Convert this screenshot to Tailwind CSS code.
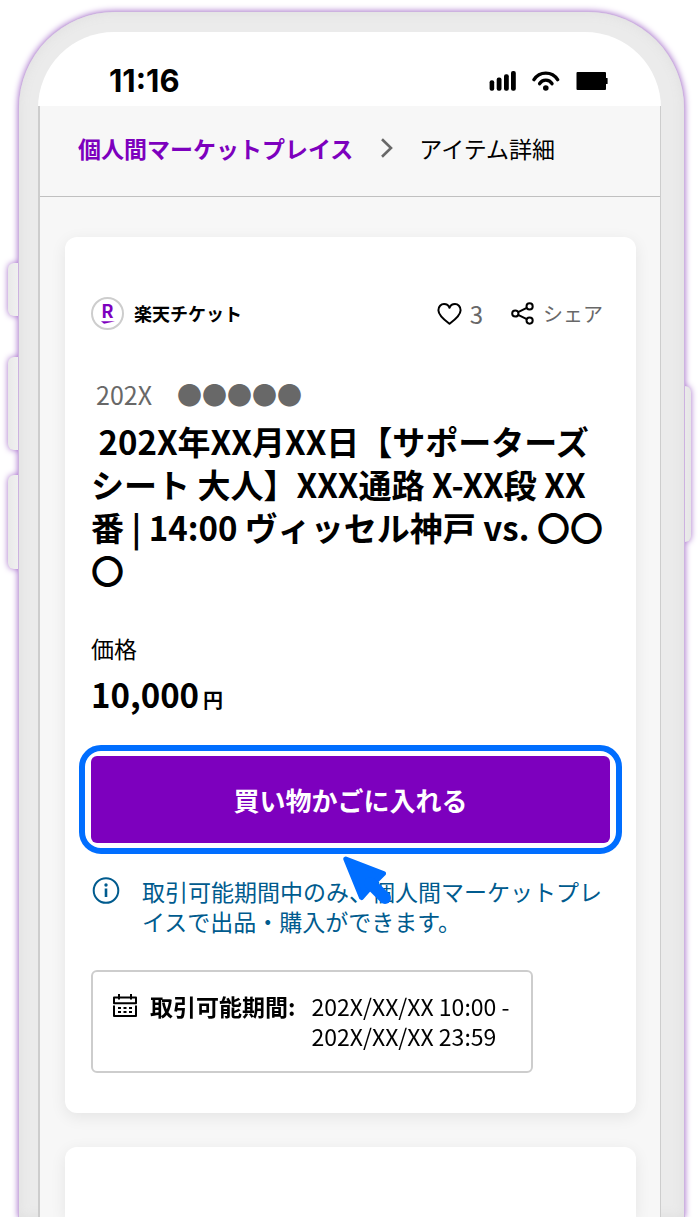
<!DOCTYPE html>
<html lang="ja">
<head>
  <meta charset="UTF-8" />
  <meta name="viewport" content="width=device-width, initial-scale=1.0" />
  <title>アイテム詳細 | 個人間マーケットプレイス</title>
  <script src="https://cdn.jsdelivr.net/npm/@tailwindcss/browser@4"></script>
</head>
<body class="min-h-screen flex flex-col bg-white pt-3 pl-[19px] pr-[14px] overflow-x-hidden text-black font-['Noto_Sans_CJK_JP','Noto_Sans',sans-serif]">

  <!-- Phone -->
  <div class="relative flex-1 flex flex-col drop-shadow-[0_0_3px_#a66fcb]">

    <!-- Side buttons -->
    <div class="absolute top-[251px] -left-[11px] w-4 h-[53px] rounded-l-md bg-linear-to-r from-[#e9e9e9] to-[#f4f4f4]"></div>
    <div class="absolute top-[345px] -left-[11px] w-4 h-[93px] rounded-l-md bg-linear-to-r from-[#e9e9e9] to-[#f4f4f4]"></div>
    <div class="absolute top-[463px] -left-[11px] w-4 h-[94px] rounded-l-md bg-linear-to-r from-[#e9e9e9] to-[#f4f4f4]"></div>
    <div class="absolute top-[374px] -right-[7px] w-4 h-[156px] rounded-r-md bg-linear-to-r from-[#f0f0f0] to-[#e6e6e6]"></div>

    <div class="relative flex-1 flex flex-col rounded-t-[96px] pt-5 pl-[19px] pr-[23px] bg-[#ebebeb] shadow-[inset_0_0_12px_#dfdfdf,0_0_0_1px_#cdb2e0]">
      <div class="flex-1 flex flex-col rounded-t-[76px] bg-white">

        <!-- Status bar -->
        <div class="h-[74px] pt-6 pl-[71px] pr-[53px] flex items-center justify-between">
          <span class="font-['Inter',sans-serif] font-bold text-[31px] leading-8">11:16</span>
          <div class="flex items-center gap-4">
            <svg class="w-[27px] h-5" viewBox="0 0 27 20">
              <rect x="0.6" y="9.2" width="4.6" height="10.6" rx="2" />
              <rect x="7.7" y="6.4" width="4.8" height="13.4" rx="2" />
              <rect x="15" y="3.2" width="4.8" height="16.6" rx="2" />
              <rect x="22" y="0" width="4.8" height="19.8" rx="2" />
            </svg>
            <svg class="w-7 h-5" viewBox="0 0 28 20" fill="none" stroke="#000" stroke-width="3.4" stroke-linecap="round">
              <path d="M2 8.6A14 14 0 0 1 25.6 8.6" />
              <path d="M7.6 12.7A7.2 7.2 0 0 1 20 12.7" />
              <circle cx="13.8" cy="17" r="2.8" fill="#000" stroke="none" />
            </svg>
            <svg class="w-8 h-[18px]" viewBox="0 0 32 18">
              <rect x="0.5" width="29.5" height="18" rx="1" />
              <rect x="29" y="6" width="2.6" height="6" rx="0.6" />
            </svg>
          </div>
        </div>

        <div class="flex-1 flex flex-col bg-[#f7f7f7] border-l-2 border-r border-[#cdcdcd]">

          <!-- Breadcrumb -->
          <nav class="h-[91px] pl-[38px] pb-1.5 flex items-center border-b border-[#c0c0c0] text-[23px] leading-8">
            <a href="#" class="font-bold text-[#7d00be]">個人間マーケットプレイス</a>
            <svg class="w-4 h-5 ml-[26px] mr-6" viewBox="0 0 16 20" fill="none" stroke="#686868" stroke-width="2.6">
              <path d="M3 1.2L12 10L3 18.8" />
            </svg>
            <span>アイテム詳細</span>
          </nav>

          <main class="flex-1 flex flex-col gap-[34px] pt-10 pl-[25px] pr-6">

            <section class="rounded-xl bg-white pt-15 pb-10 px-[26px] shadow-[0_4px_16px_rgba(0,0,0,0.08)]">

              <!-- Seller and actions -->
              <div class="flex items-center h-[33px]">
                <div class="relative w-[33px] h-[33px] rounded-full border-2 border-[#cdcdcd] flex justify-center text-[#7d00be]">
                  <span class="font-bold text-lg leading-[22px]">R</span>
                  <svg class="absolute left-2 bottom-1 w-[14px] h-[3px]" viewBox="0 0 14 3" fill="currentColor">
                    <path d="M0 0.2H14L3 2.8z" />
                  </svg>
                </div>
                <span class="ml-[10px] pb-0.5 font-bold text-lg leading-8">楽天チケット</span>
                <div class="ml-auto mr-[7px] flex items-center gap-7 text-[#686868]">
                  <button type="button" class="flex items-center gap-2 text-2xl leading-8">
                    <svg class="w-[25px] h-[22px]" viewBox="0 0 25 22" fill="none" stroke="#000" stroke-width="2" stroke-linejoin="round">
                      <path d="M12.5 20.8C8.8 18 1.4 12.6 1.4 7.2C1.4 3.6 4 1 7 1C9.4 1 11.6 2.4 12.5 4.8C13.4 2.4 15.6 1 18 1C21 1 23.6 3.6 23.6 7.2C23.6 12.6 16.2 18 12.5 20.8z" />
                    </svg>
                    3
                  </button>
                  <button type="button" class="flex items-center gap-2 text-xl leading-8">
                    <svg class="w-6 h-[23px]" viewBox="0 0 24 23" fill="none" stroke="#000" stroke-width="2">
                      <circle cx="4.3" cy="11.5" r="3.1" />
                      <circle cx="18.6" cy="4.4" r="3.1" />
                      <circle cx="18.6" cy="18.6" r="3.1" />
                      <path d="M7.1 10.1L15.8 5.8M7.1 12.9L15.8 17.2" />
                    </svg>
                    シェア
                  </button>
                </div>
              </div>

              <p class="mt-[46px] pl-[5px] text-[25px] leading-9 text-[#686868]">202X　●●●●●</p>

              <h1 class="mt-2 text-[33px] leading-[43px] font-bold whitespace-nowrap">&nbsp;202X年XX月XX日【サポーターズ<br />シート 大人】XXX通路 X-XX段 XX<br />番 | 14:00 ヴィッセル神戸 vs. 〇〇<br />〇</h1>

              <p class="mt-[39px] text-[23px] leading-[34px]">価格</p>
              <p class="mt-[5px] flex items-baseline gap-1 font-bold">
                <span class="text-[33px] leading-12">10,000</span>
                <span class="text-xl">円</span>
              </p>

              <!-- Highlighted purchase button -->
              <div class="relative z-10 mt-[27px] -mx-3 py-[5px] px-1.5 border-6 border-[#006eff] rounded-[22px]">
                <button type="button" class="w-full h-[87px] rounded-md bg-[#7d00be] text-white text-[26px] leading-10 font-bold">買い物かごに入れる</button>
                <svg class="absolute left-1/2 top-[105px] -ml-2 w-[50px] h-[50px]" viewBox="0 0 50 50" fill="#006eff" stroke="#006eff" stroke-linejoin="round" stroke-linecap="round">
                  <path stroke-width="5" d="M2.8 3L40.5 17.5L33 25L26 33L18.5 41.5z" />
                  <path stroke-width="12" d="M27 27L42 42" />
                </svg>
              </div>

              <div class="mt-[22px] flex items-start text-[23px] leading-[30px] text-[#005b8e]">
                <svg class="w-7 h-7 shrink-0 mt-px mr-[22px] ml-px" viewBox="0 0 28 28" fill="none" stroke="currentColor" stroke-width="2">
                  <circle cx="14" cy="13.5" r="12.3" />
                  <path stroke-width="2.6" d="M14 11.5V20" />
                  <circle cx="14" cy="8" r="1.7" fill="currentColor" stroke="none" />
                </svg>
                <p class="whitespace-nowrap">取引可能期間中のみ、個人間マーケットプレ<br />イスで出品・購入ができます。</p>
              </div>

              <!-- Trading period -->
              <div class="mt-[34px] w-fit flex items-start border-2 border-[#cdcdcd] rounded-md pt-[19px] pb-5 pl-5 pr-[22px] text-[23px] leading-[30px]">
                <svg class="w-6 h-6 mt-[3px] mr-[13px] shrink-0" viewBox="0 0 24 24" fill="none" stroke="#000" stroke-width="2">
                  <path d="M1 9.2V3.4H23V9.2zM6 0V5.6M18 0V5.6M1 11.4V22H23V11.4" stroke-linejoin="round" />
                  <path d="M5 14H8M10.5 14H13.5M16 14H19M5 18H8M10.5 18H13.5M16 18H19" />
                </svg>
                <span class="font-bold">取引可能期間:</span>
                <span class="ml-4">202X/XX/XX 10:00 -<br />202X/XX/XX 23:59</span>
              </div>
            </section>

            <section class="flex-1 min-h-[70px] rounded-t-xl bg-white shadow-[0_4px_16px_rgba(0,0,0,0.08)]"></section>
          </main>
        </div>
      </div>
    </div>
  </div>

</body>
</html>
